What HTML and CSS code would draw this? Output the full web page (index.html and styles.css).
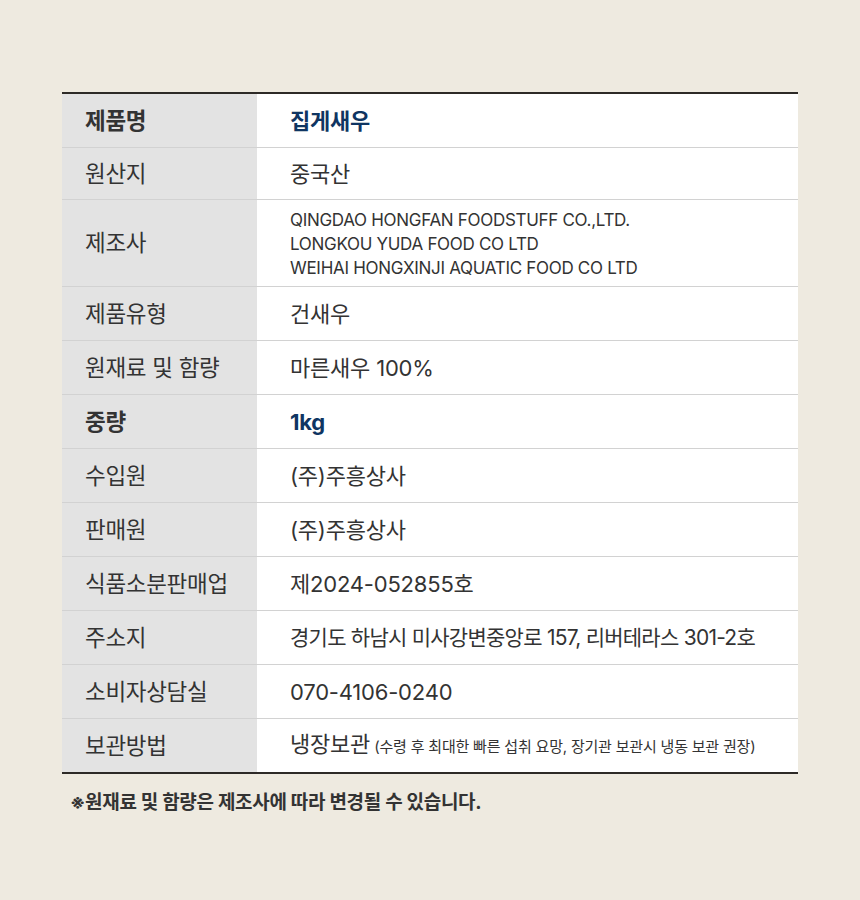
FILE: index.html
```
<!DOCTYPE html>
<html lang="ko">
<head>
<meta charset="utf-8">
<link rel="stylesheet" href="styles.css">
</head>
<body>
<div class="wrap">
  <table class="info">
    <tbody>
      <tr class="em"><th>제품명</th><td>집게새우</td></tr>
      <tr class="r52"><th>원산지</th><td>중국산</td></tr>
      <tr class="multi"><th>제조사</th><td><div class="en">QINGDAO HONGFAN FOODSTUFF CO.,LTD.<br>LONGKOU YUDA FOOD CO LTD<br>WEIHAI HONGXINJI AQUATIC FOOD CO LTD</div></td></tr>
      <tr><th>제품유형</th><td>건새우</td></tr>
      <tr><th>원재료 및 함량</th><td>마른새우 100%</td></tr>
      <tr class="em"><th>중량</th><td>1kg</td></tr>
      <tr><th>수입원</th><td>(주)주흥상사</td></tr>
      <tr><th>판매원</th><td>(주)주흥상사</td></tr>
      <tr><th>식품소분판매업</th><td>제2024-052855호</td></tr>
      <tr><th>주소지</th><td class="addr">경기도 하남시 미사강변중앙로 157, 리버테라스 301-2호</td></tr>
      <tr><th>소비자상담실</th><td>070-4106-0240</td></tr>
      <tr class="last"><th>보관방법</th><td>냉장보관<span class="small"> (수령 후 최대한 빠른 섭취 요망, 장기관 보관시 냉동 보관 권장)</span></td></tr>
    </tbody>
  </table>
  <p class="note">※원재료 및 함량은 제조사에 따라 변경될 수 있습니다.</p>
</div>
</body>
</html>
```
FILE: styles.css
```
html, body {
  margin: 0;
  padding: 0;
  background: #eeeae0;
}
body {
  font-family: Inter, "Noto Sans CJK KR", sans-serif;
  color: #333333;
  width: 860px;
  height: 900px;
}
.wrap {
  padding: 92px 62px 0 62px;
}
.info {
  width: 736px;
  border-collapse: collapse;
  border-top: 2px solid #2d2a27;
  border-bottom: 2px solid #2d2a27;
}
.info th, .info td {
  height: 53px;
  padding: 0;
  vertical-align: middle;
  border-bottom: 1px solid #d2d2d2;
  line-height: 24px;
}
.info tr.r52 th, .info tr.r52 td { height: 51px; }
.info tr.last th, .info tr.last td { border-bottom: none; }
.info th {
  width: 172px;
  padding-left: 23px;
  text-align: left;
  font-weight: 400;
  font-size: 22.5px;
  letter-spacing: -0.3px;
  background: #e3e3e3;
  color: #333333;
}
.info td {
  padding-left: 33px;
  font-size: 22px;
  letter-spacing: -0.2px;
  background: #ffffff;
  color: #333333;
}
.info td.addr {
  font-size: 21px;
  letter-spacing: -0.75px;
}
.info tr.em th { font-weight: 700; }
.info tr.em td { font-weight: 700; color: #0f3562; }
.info tr.multi th, .info tr.multi td { height: 86px; }
.en {
  font-size: 17px;
  line-height: 24px;
  letter-spacing: -0.3px;
  padding-top: 2px;
}
.small {
  font-size: 15px;
  letter-spacing: -0.2px;
}
.note {
  margin: 13px 0 0 8px;
  font-size: 19px;
  font-weight: 700;
  letter-spacing: -0.3px;
  color: #333333;
}
```
